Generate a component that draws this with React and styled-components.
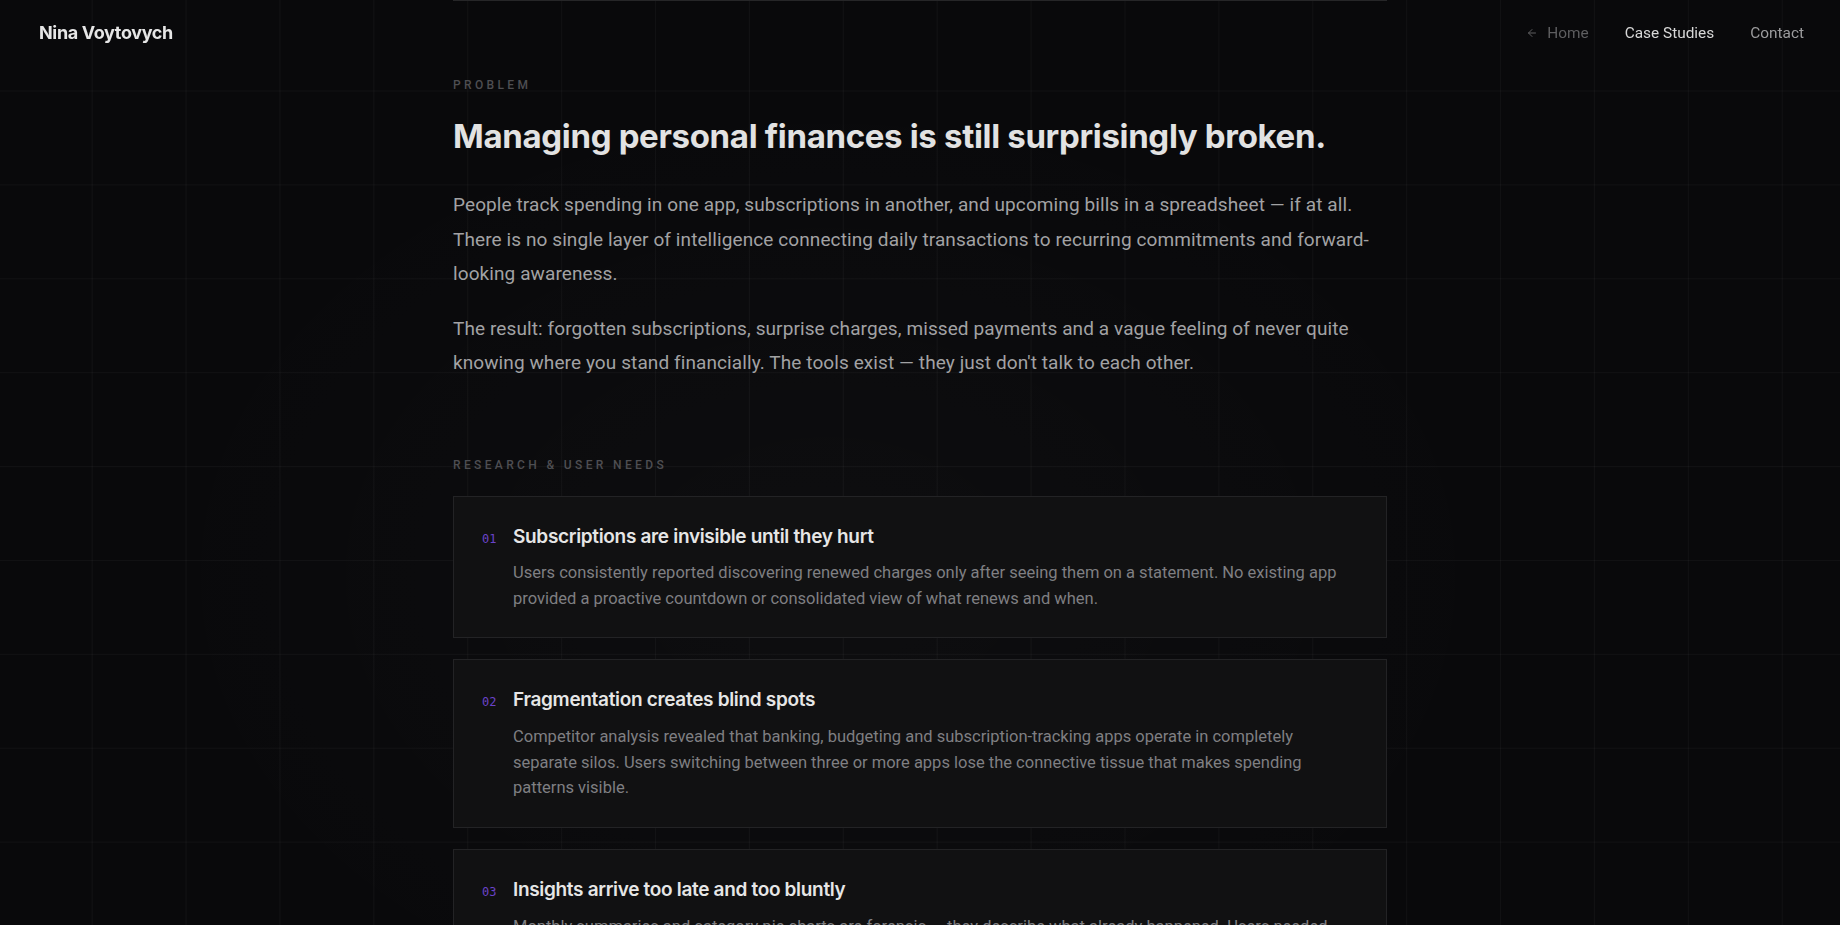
import styled, { createGlobalStyle } from 'styled-components'
import { ArrowLeft } from 'lucide-react'

const GlobalStyle = createGlobalStyle`
  * {
    box-sizing: border-box;
  }

  html, body {
    margin: 0;
    padding: 0;
    background: #09090b;
    overflow: hidden;
  }
`

const Page = styled.div`
  min-height: 100vh;
  background-color: #09090b;
  background-image:
    radial-gradient(ellipse 1000px 720px at 45% 58%, rgba(255, 255, 255, 0.018), transparent 70%),
    linear-gradient(to right, rgba(255, 255, 255, 0.035) 1px, transparent 1px),
    linear-gradient(to bottom, rgba(255, 255, 255, 0.035) 1px, transparent 1px);
  background-size: 100% 100%, 93.9px 93.9px, 93.9px 93.9px;
  background-position: 0 0, 91.7px 0, 0 90.5px;
  font-family: "Roboto", "Liberation Sans", sans-serif;
`

const Header = styled.header`
    position: fixed;
    top: 0;
    left: 0;
    right: 0;
    height: 65px;
    z-index: 10;

    display: flex;
    align-items: center;
    justify-content: space-between;
    padding: 0 36px 0 39px;
`

const Brand = styled.a`
    font-family: "Inter", sans-serif;
    font-weight: 700;
    font-size: 18px;
    letter-spacing: -0.02em;
    color: #e6e6e6;
    text-decoration: none;
`

const Nav = styled.nav`
    display: flex;
    align-items: center;
    gap: 36px;
`

const NavLink = styled.a`
    display: flex;
    align-items: center;
    gap: 9px;
    font-size: 15.4px;
    color: ${p => p.$tone};
    text-decoration: none;
    cursor: pointer;
`

const Column = styled.main`
    width: 934px;
    margin: 0 auto;
`

const PrevEdge = styled.div`
    height: 1px;
    background: #262628;
`

const Section = styled.section`
    margin-top: 75px;
`

const Label = styled.div`
    font-size: 12px;
    line-height: 18px;
    font-weight: 500;
    letter-spacing: 0.28em;
    text-transform: uppercase;
    color: #4e4e52;
    margin-bottom: 22px;
`

const Heading = styled.h2`
    font-family: "Inter", sans-serif;
    font-weight: 700;
    font-size: 33px;
    line-height: 40px;
    letter-spacing: -0.01em;
    color: #e2e2e2;
    margin: 5px 0 32px;
`

const Para = styled.p`
    font-size: 19px;
    line-height: 34.5px;
    letter-spacing: 0.005em;
    color: #a2a2a4;
    margin: 0 0 20px;

    &:last-child {
        margin-bottom: 0;
    }
`

const CardList = styled.div`
    display: flex;
    flex-direction: column;
    gap: 21px;
`

const Card = styled.article`
    display: flex;
    align-items: baseline;
    gap: 17px;
    padding: 28px 28px 26px;
    background: #111112;
    border: 1px solid #232325;
`

const Num = styled.span`
    flex-shrink: 0;
    width: 14px;
    font-family: "DejaVu Sans Mono", "Liberation Mono", monospace;
    font-size: 12px;
    color: #6b43c9;
`

const CardBody = styled.div`
    flex: 1;
`

const CardTitle = styled.h3`
    font-family: "Inter", sans-serif;
    font-weight: 600;
    font-size: 19px;
    line-height: 24.7px;
    letter-spacing: -0.017em;
    color: #e6e6e6;
    margin: 0 0 11px;
`

const CardText = styled.p`
    max-width: 835px;
    font-size: 16.5px;
    line-height: 25.6px;
    color: #7f7f82;
    margin: 0;
`

const findings = [
    {
        num: '01',
        title: 'Subscriptions are invisible until they hurt',
        text: 'Users consistently reported discovering renewed charges only after seeing them on a statement. No existing app provided a proactive countdown or consolidated view of what renews and when.',
    },
    {
        num: '02',
        title: 'Fragmentation creates blind spots',
        text: 'Competitor analysis revealed that banking, budgeting and subscription-tracking apps operate in completely separate silos. Users switching between three or more apps lose the connective tissue that makes spending patterns visible.',
    },
    {
        num: '03',
        title: 'Insights arrive too late and too bluntly',
        text: 'Monthly summaries and category pie charts are forensic — they describe what already happened. Users needed gentle, forward-looking signals that help them act before money leaves the account.',
    },
]

const App = () => {
    return (
        <Page>
            <GlobalStyle />
            <Header>
                <Brand>Nina Voytovych</Brand>
                <Nav>
                    <NavLink $tone="#5e5e60">
                        <ArrowLeft size={12} strokeWidth={2} />
                        Home
                    </NavLink>
                    <NavLink $tone="#d8d8d8">Case Studies</NavLink>
                    <NavLink $tone="#9c9c9e">Contact</NavLink>
                </Nav>
            </Header>

            <Column>
                <PrevEdge />

                <Section>
                    <Label>Problem</Label>
                    <Heading>Managing personal finances is still surprisingly broken.</Heading>
                    <Para>
                        People track spending in one app, subscriptions in another, and upcoming bills in a spreadsheet — if at all. There is no single layer of intelligence connecting daily transactions to recurring commitments and forward-looking awareness.
                    </Para>
                    <Para>
                        The result: forgotten subscriptions, surprise charges, missed payments and a vague feeling of never quite knowing where you stand financially. The tools exist — they just don't talk to each other.
                    </Para>
                </Section>

                <Section>
                    <Label>Research &amp; User Needs</Label>
                    <CardList>
                        {findings.map(f => (
                            <Card key={f.num}>
                                <Num>{f.num}</Num>
                                <CardBody>
                                    <CardTitle>{f.title}</CardTitle>
                                    <CardText>{f.text}</CardText>
                                </CardBody>
                            </Card>
                        ))}
                    </CardList>
                </Section>
            </Column>
        </Page>
    )
}

export default App
